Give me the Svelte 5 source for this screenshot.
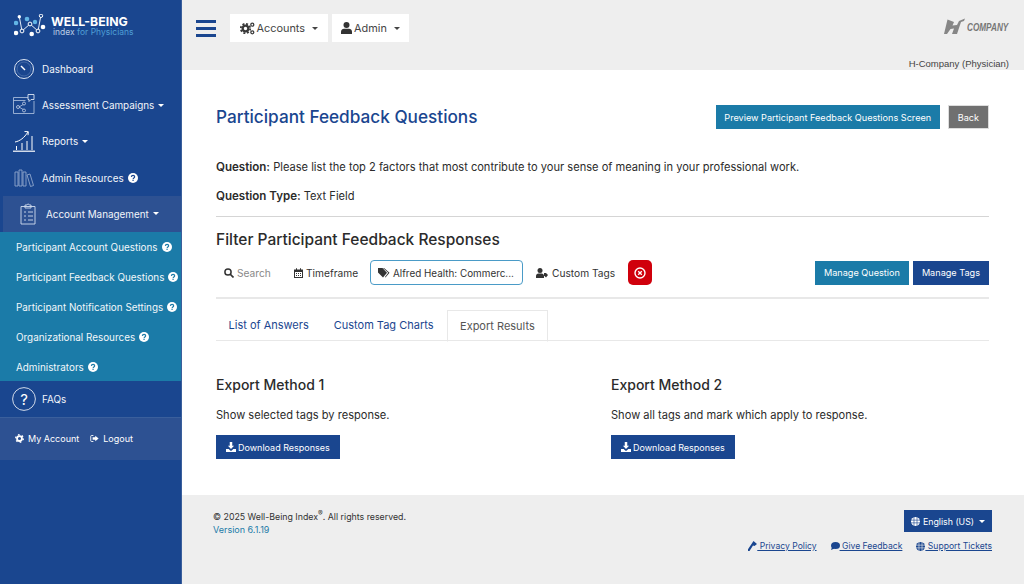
<script>
  const sub = [
    'Participant Account Questions',
    'Participant Feedback Questions',
    'Participant Notification Settings',
    'Organizational Resources',
    'Administrators'
  ];
</script>

{#snippet help(mark)}
  <svg class="help" viewBox="0 0 16 16" aria-hidden="true"><circle cx="8" cy="8" r="8" fill="#fff"/><path d="M5.400 6.200c.1-1.500 1.200-2.400 2.700-2.400s2.500.8 2.500 2.100c0 1-.6 1.500-1.300 2-.7.4-1 .8-1 1.500" fill="none" stroke={mark} stroke-width="2"/><rect x="7.100" y="10.700" width="2" height="2" fill={mark}/></svg>
{/snippet}

{#snippet download()}
  <svg class="dl" viewBox="0 0 12 12" aria-hidden="true"><path d="M4.500 0h3v4.500h2.200L6 8.300 2.300 4.500h2.200zM0 8.500h3.300L5 10.200c.5.500 1.400.5 2 0l1.700-1.700H12V12H0z" fill="#fff"/></svg>
{/snippet}

<div class="page">
  <aside class="side">
    <div class="logo">
      <svg width="34" height="26" viewBox="0 0 34 26" aria-hidden="true">
        <path d="M5.300 2.700L8 17l8-7 8 7 3-16" fill="none" stroke="#e4ecf7" stroke-width="1"/>
        <circle cx="5.300" cy="2.700" r="1.700" fill="#fff"/>
        <circle cx="2" cy="9" r="2.300" fill="#62b5e5"/><circle cx="13" cy="5" r="2.300" fill="#62b5e5"/><circle cx="21" cy="8" r="2.200" fill="#62b5e5"/>
        <circle cx="2" cy="19" r="2.300" fill="#fff"/><circle cx="17.700" cy="20" r="2.300" fill="#fff"/><circle cx="29" cy="13" r="2.300" fill="#fff"/>
        <circle cx="8" cy="17" r="1.900" fill="#1a468f" stroke="#fff"/><circle cx="16" cy="10" r="1.900" fill="#1a468f" stroke="#fff"/><circle cx="24" cy="17" r="1.900" fill="#1a468f" stroke="#fff"/><circle cx="27" cy="1.800" r="1.700" fill="#1a468f" stroke="#fff"/>
      </svg>
      <div class="logotext"><b>WELL-BEING</b><span>index <em>for Physicians</em></span></div>
    </div>
    <nav>
      <a class="item">
        <svg class="ni" viewBox="0 0 22 22"><circle cx="11" cy="11" r="9.500" fill="none" stroke="#dbe4f2"/><circle cx="11" cy="11" r="7" fill="none" stroke="#5d7fb5" stroke-width=".6"/><path d="M8 8l4 4" stroke="#fff" stroke-width="1.500"/></svg>
        <span>Dashboard</span>
      </a>
      <a class="item">
        <svg class="ni" viewBox="0 0 22 22"><path d="M15 3.500H.5v16h20.500V7M.5 6.500h12" fill="none" stroke="#b5c6e2" stroke-width=".8"/><path d="M15 .5h6v5h-3l-2 2v-2h-1z" fill="none" stroke="#dbe4f2" stroke-width=".9"/><path d="M6 13l5-3M6 13l5 3" stroke="#b5c6e2" stroke-width=".8"/><circle cx="5" cy="13" r="1.500" fill="#1a468f" stroke="#dbe4f2" stroke-width=".7"/><circle cx="11" cy="9.500" r="1.500" fill="#1a468f" stroke="#dbe4f2" stroke-width=".7"/><circle cx="11" cy="16.500" r="1.500" fill="#1a468f" stroke="#dbe4f2" stroke-width=".7"/></svg>
        <span>Assessment Campaigns</span><i class="caret"></i>
      </a>
      <a class="item">
        <svg class="ni" viewBox="0 0 22 22"><path d="M0 21.200h22" stroke="#fff" stroke-width="1.200"/><path d="M3.500 20v-4M9 20v-7M14 20v-9M19 20V6" stroke="#fff" stroke-width="1" fill="none"/><path d="M2 12c5-1 9-4 13-10M11.500 1.500l3.800.2-.3 3.500" stroke="#fff" stroke-width="1" fill="none"/></svg>
        <span>Reports</span><i class="caret"></i>
      </a>
      <a class="item">
        <svg class="ni" viewBox="0 0 22 22"><path d="M2 5h3v14H2zM6 3h3v16H6zM10 5h3v14h-3zM14 8l3-1 3.500 11.500-3 1z" fill="none" stroke="#8fa6cc" stroke-width=".9"/></svg>
        <span>Admin Resources</span>{@render help('#1a468f')}
      </a>
      <a class="item active">
        <svg class="ni" viewBox="0 0 22 22"><path d="M4 3.500h14v17.500H4z" fill="none" stroke="#d3deef" stroke-width=".9"/><path d="M8 3.500V2h2c.3-1.300 2-1.300 2.300 0H14v3H8zM7 9h2M7 13h2M7 17h2M11 9h5M11 13h5M11 17h5" fill="none" stroke="#d3deef" stroke-width=".9"/></svg>
        <span>Account Management</span><i class="caret"></i>
      </a>
      <div class="sub">
        {#each sub as s}
          <a class="subitem"><span>{s}</span>{@render help('#1b7ba8')}</a>
        {/each}
      </div>
      <a class="item faq">
        <svg class="ni big" viewBox="0 0 24 24"><circle cx="12" cy="12" r="11.400" fill="none" stroke="#fff" stroke-width=".8"/><text x="12" y="17.500" text-anchor="middle" fill="#fff" font-size="15">?</text></svg>
        <span>FAQs</span>
      </a>
    </nav>
    <div class="acct">
      <a>
        <svg viewBox="0 0 12 12"><circle cx="6" cy="6" r="3.300" fill="none" stroke="#fff" stroke-width="2.400"/><circle cx="6" cy="6" r="5" fill="none" stroke="#fff" stroke-width="2" stroke-dasharray="2.100 3.140"/></svg>
        My Account
      </a>
      <a>
        <svg viewBox="0 0 12 12"><path d="M4.500 2H2a1 1 0 0 0-1 1v6a1 1 0 0 0 1 1h2.500" fill="none" stroke="#fff" stroke-width="1.200"/><path d="M7 2.300L11.500 6 7 9.700V7.600H3.500V4.400H7z" fill="#fff"/></svg>
        Logout
      </a>
    </div>
  </aside>

  <div class="main">
    <header class="top">
      <div class="bar">
        <button class="burger" aria-label="Menu"><i></i><i></i><i></i></button>
        <button class="menu">
          <svg width="15" height="13" viewBox="0 0 15 13"><circle cx="5.500" cy="6.500" r="2.800" fill="none" stroke="#3a3a3a" stroke-width="2.200"/><circle cx="5.500" cy="6.500" r="4.700" fill="none" stroke="#3a3a3a" stroke-width="1.800" stroke-dasharray="2 1.690"/><circle cx="12.300" cy="2.700" r="1.500" fill="none" stroke="#3a3a3a" stroke-width="1.300"/><circle cx="12.300" cy="10.300" r="1.500" fill="none" stroke="#3a3a3a" stroke-width="1.300"/></svg>
          Accounts<i class="caret dark"></i>
        </button>
        <button class="menu">
          <svg width="11" height="12" viewBox="0 0 11 12"><circle cx="5.500" cy="3" r="3" fill="#333"/><path d="M0 12V9.500C0 8 1.500 6.800 3 6.800h5c1.500 0 3 1.200 3 2.700V12z" fill="#333"/></svg>
          Admin<i class="caret dark"></i>
        </button>
        <div class="brand">
          <svg width="21" height="17" viewBox="0 0 21 17"><path d="M3.500 1.500L10 4 8.500 7.500 13 7l2-4 6-2.500-1 2.500-3 1-4 12H8l2-5.500-3.500.5L3 16H0z" fill="#868686"/></svg>
          <span>COMPANY</span>
        </div>
      </div>
      <div class="who">H-Company (Physician)</div>
    </header>

    <main class="content">
      <div class="titlerow">
        <h1>Participant Feedback Questions</h1>
        <div class="actions">
          <button class="btn teal">Preview Participant Feedback Questions Screen</button>
          <button class="btn grey">Back</button>
        </div>
      </div>
      <p class="q"><b>Question:</b> Please list the top 2 factors that most contribute to your sense of meaning in your professional work.</p>
      <p class="q type"><b>Question Type:</b> Text Field</p>
      <hr />
      <h2>Filter Participant Feedback Responses</h2>
      <div class="filters">
        <span class="f search">
          <svg width="10" height="10" viewBox="0 0 10 10"><circle cx="4" cy="4" r="3.100" fill="none" stroke="#333" stroke-width="1.500"/><path d="M6.500 6.500L9.500 9.500" stroke="#333" stroke-width="1.700"/></svg>
          <em>Search</em>
        </span>
        <span class="f time">
          <svg width="9" height="10" viewBox="0 0 9 10"><path d="M0 1.500h2V.3h1v1.200h3V.3h1v1.200h2V10H0zM1 4v5h7V4z" fill="#333"/><path d="M2 5h1v1H2zM4 5h1v1H4zM6 5h1v1H6zM2 7h1v1H2zM4 7h1v1H4zM6 7h1v1H6z" fill="#333"/></svg>
          Timeframe
        </span>
        <span class="f chip">
          <svg width="12" height="10" viewBox="0 0 12 10"><path d="M0 0h4.500l4.500 4.700L5 9.500 0 4.500z" fill="#333"/><path d="M6 0l5.500 4.800L7.500 9.500 7 9l3.200-4.200L5 0z" fill="#333"/></svg>
          Alfred Health: Commerc...
        </span>
        <span class="f tags">
          <svg width="12" height="10" viewBox="0 0 12 10"><circle cx="4" cy="2.500" r="2.500" fill="#333"/><path d="M0 10V8c0-1.500 1-2.500 2.500-2.500h3C7 5.500 8 6.500 8 8v2z" fill="#333"/><path d="M8 5h2l2 2-2 2.500-2-2z" fill="#333"/></svg>
          Custom Tags
        </span>
        <button class="clear" aria-label="Clear">
          <svg width="12" height="12" viewBox="0 0 12 12"><circle cx="6" cy="6" r="5" fill="none" stroke="#fff" stroke-width="1.400"/><path d="M4.200 4.200l3.600 3.600M7.800 4.200l-3.600 3.600" stroke="#fff" stroke-width="1.300"/></svg>
        </button>
        <div class="right">
          <button class="btn teal small">Manage Question</button>
          <button class="btn navy small">Manage Tags</button>
        </div>
      </div>
      <hr class="h2" />
      <div class="tabs">
        <a>List of Answers</a>
        <a>Custom Tag Charts</a>
        <a class="on">Export Results</a>
      </div>
      <div class="methods">
        <section>
          <h3>Export Method 1</h3>
          <p>Show selected tags by response.</p>
          <button class="btn navy dlb">{@render download()}Download Responses</button>
        </section>
        <section>
          <h3>Export Method 2</h3>
          <p>Show all tags and mark which apply to response.</p>
          <button class="btn navy dlb">{@render download()}Download Responses</button>
        </section>
      </div>
    </main>

    <footer class="foot">
      <div class="copy">
        <div>© 2025 Well-Being Index<sup>®</sup>. All rights reserved.</div>
        <a>Version 6.1.19</a>
      </div>
      <div class="fr">
        <button class="lang">
          <svg width="9" height="9" viewBox="0 0 10 10"><circle cx="5" cy="5" r="5" fill="#fff"/><path d="M0 3.500h10M0 6.500h10M3.300 0v10M6.700 0v10" stroke="#1a468f" stroke-width=".7"/></svg>
          English (US)<i class="caret"></i>
        </button>
        <div class="links">
          <a><svg width="9" height="10" viewBox="0 0 9 10"><path d="M5.500 0L9 3 6.500 5 5 4.500 1.500 10H0V8.300L3.500 3z" fill="#1a468f"/></svg><u>&nbsp;Privacy Policy</u></a>
          <a><svg width="9" height="8" viewBox="0 0 9 8"><ellipse cx="4.500" cy="3.500" rx="4.500" ry="3.500" fill="#1a468f"/><path d="M1 5L0 8l3.500-1.500z" fill="#1a468f"/></svg><u>&nbsp;Give Feedback</u></a>
          <a><svg width="9" height="9" viewBox="0 0 10 10"><circle cx="5" cy="5" r="5" fill="#1a468f"/><path d="M0 3.500h10M0 6.500h10M3.300 0v10M6.700 0v10" stroke="#eee" stroke-width=".7"/></svg><u>&nbsp;Support Tickets</u></a>
        </div>
      </div>
    </footer>
  </div>
</div>

<style>
  :global(body) { margin: 0; font-family: Inter, "Liberation Sans", sans-serif; color: #2b2b2b; }
  .page { display: flex; height: 584px; width: 1024px; overflow: hidden; font-size: 12px; }
  a { text-decoration: none; color: inherit; }
  button { font-family: inherit; border: 0; cursor: pointer; }
  .caret { display: inline-block; width: 0; height: 0; border: 3.500px solid transparent; border-top: 3.500px solid #fff; border-bottom: 0; margin-left: 4px; vertical-align: 2px; }
  .caret.dark { border-top-color: #444; margin-left: 5px; }

  .side { width: 182px; flex: none; background: #1a468f; color: #fff; border-right: 1px solid #3a5f9c; box-sizing: border-box; display: flex; flex-direction: column; }
  .logo { height: 50.800px; padding: 14px 0 0 14px; box-sizing: border-box; display: flex; gap: 3px; flex: none; }
  .logotext { display: flex; flex-direction: column; line-height: 10px; margin-top: 1px; }
  .logotext b { font-size: 12.300px; font-weight: 700; line-height: 13px; }
  .logotext span { font-size: 8.500px; color: #b9cbe4; margin-left: 2px; line-height: 9px; }
  .logotext em { font-style: normal; color: #4f9fd6; }
  nav { display: flex; flex-direction: column; }
  .item { height: 36.250px; display: flex; align-items: center; padding-left: 13px; font-size: 9.900px; color: #f2f5fa; white-space: nowrap; box-sizing: border-box; }
  .item > span { margin-left: 7px; }
  .ni { width: 22px; height: 22px; flex: none; }
  .help { width: 10px; height: 10px; margin-left: 4px; flex: none; }
  .active { background: #2d5192; margin-left: 3px; padding-left: 14px; height: 36px; }
  .sub { background: #1b7ba8; height: 149px; }
  .subitem { height: 30px; display: flex; align-items: center; padding-left: 16px; font-size: 9.900px; color: #f2f7fa; white-space: nowrap; }
  .faq { padding-left: 12px; height: 36px; }
  .faq > span { margin-left: 6px; }
  .big { width: 24px; height: 24px; }
  .acct { background: #2d5192; height: 43px; display: flex; align-items: center; padding: 0 0 0 15px; gap: 11px; font-size: 9px; border-top: 1px solid #3a5f9c; box-sizing: border-box; }
  .acct a { display: flex; align-items: center; gap: 4px; }
  .acct svg { width: 9px; height: 9px; }

  .main { flex: 1; display: flex; flex-direction: column; min-width: 0; }
  .top { background: #eee; height: 70px; flex: none; position: relative; }
  .bar { display: flex; align-items: center; padding: 14px 15px 0 14px; height: 42px; box-sizing: border-box; gap: 4px; }
  .burger { width: 20px; height: 17px; padding: 0; background: none; display: flex; flex-direction: column; justify-content: space-between; margin-right: 10px; }
  .burger i { height: 3px; background: #1a468f; display: block; }
  .menu { height: 28px; background: #fff; display: flex; align-items: center; padding: 0 9.500px; font-size: 10.900px; color: #444; gap: 2px; }
  .brand { margin: -3px 0 0 auto; display: flex; align-items: center; gap: 2px; color: #777; }
  .brand span { width: 42px; font: italic 700 10.500px "Liberation Sans Narrow", "Liberation Sans", sans-serif; transform: scaleX(.78); transform-origin: left; white-space: nowrap; }
  .who { position: absolute; right: 15px; top: 58px; font: 9.500px/12px "Liberation Sans", sans-serif; color: #444; }

  .content { flex: 1; padding: 35px 35px 0 34px; background: #fff; display: flex; flex-direction: column; }
  .titlerow { display: flex; justify-content: space-between; align-items: flex-start; }
  h1 { margin: 0; font-size: 17.200px; line-height: 24px; font-weight: 500; color: #1a468f; }
  .actions { display: flex; gap: 8px; }
  .btn { color: #fff; height: 24px; font-size: 9.150px; padding: 0 8.500px; }
  .teal { background: #1b7ba8; }
  .grey { background: #707070; border: 1px solid #ddd; padding: 0 9px; }
  .navy { background: #1a468f; }
  .q { margin: 30px 0 0; font-size: 11.100px; line-height: 16px; color: #2b2b2b; }
  .q b { font-weight: 600; font-size: 11.550px; }
  .type { margin-top: 13px; }
  hr { border: 0; border-top: 1px solid #d5d5d5; margin: 12px 0 0; width: 100%; }
  h2 { margin: 13px 0 0; font-size: 15.500px; line-height: 19px; font-weight: 500; color: #2b2b2b; }
  .filters { display: flex; align-items: center; height: 25px; margin-top: 11px; font-size: 10.200px; color: #333; white-space: nowrap; }
  .f { display: flex; align-items: center; gap: 3px; }
  .search { margin-left: 8px; width: 70px; margin-top: 1px; }
  .search em { font-style: normal; color: #888; }
  .time { width: 76px; }
  .chip { width: 153px; height: 25px; border: 1px solid #4a9bc7; border-radius: 4px; box-sizing: border-box; padding-left: 7px; font-size: 9.900px; }
  .tags { margin-left: 13px; width: 92px; gap: 4px; }
  .clear { width: 24px; height: 25px; border-radius: 5px; background: #d0000c; padding: 0; display: flex; align-items: center; justify-content: center; }
  .right { margin-left: auto; display: flex; gap: 4px; }
  .small { height: 24px; padding: 0 9px; }
  .h2 { margin-top: 12px; border-top: 2px solid #e8e8e8; }
  .tabs { display: flex; height: 30px; margin-top: 11px; border-bottom: 1px solid #e8e8e8; font-size: 11px; }
  .tabs a { padding: 0 12.500px; line-height: 30px; color: #1a468f; }
  .tabs .on { color: #555; border: 1px solid #e8e8e8; border-bottom: 1px solid #fff; height: 30px; padding: 0 12px; margin-left: 1px; }
  .methods { display: grid; grid-template-columns: 395px 1fr; margin-top: 35px; }
  h3 { margin: 0; font-size: 14px; line-height: 18px; font-weight: 500; color: #2b2b2b; }
  section p { margin: 13px 0 0; font-size: 11.100px; line-height: 16px; }
  .dlb { margin-top: 12px; display: flex; align-items: center; gap: 2px; padding: 0 10px; font-size: 9px; }
  .dl { width: 10px; height: 10px; }

  .foot { background: #eee; height: 89px; flex: none; display: flex; justify-content: space-between; padding: 15px 32px 0 31px; box-sizing: border-box; font-size: 8.800px; }
  .copy { line-height: 13px; color: #333; }
  .copy a { color: #1b7ba8; font-size: 9px; }
  sup { font-size: 7px; line-height: 0; vertical-align: 4px; }
  .fr { display: flex; flex-direction: column; align-items: flex-end; }
  .lang { height: 22px; background: #1a468f; color: #fff; font-size: 8.800px; padding: 0 7px; display: flex; align-items: center; gap: 3px; }
  .lang .caret { margin-left: 2px; }
  .links { display: flex; gap: 14px; margin-top: 9px; color: #1a468f; font-size: 8.600px; }
  .links a { display: flex; align-items: center; }
</style>
